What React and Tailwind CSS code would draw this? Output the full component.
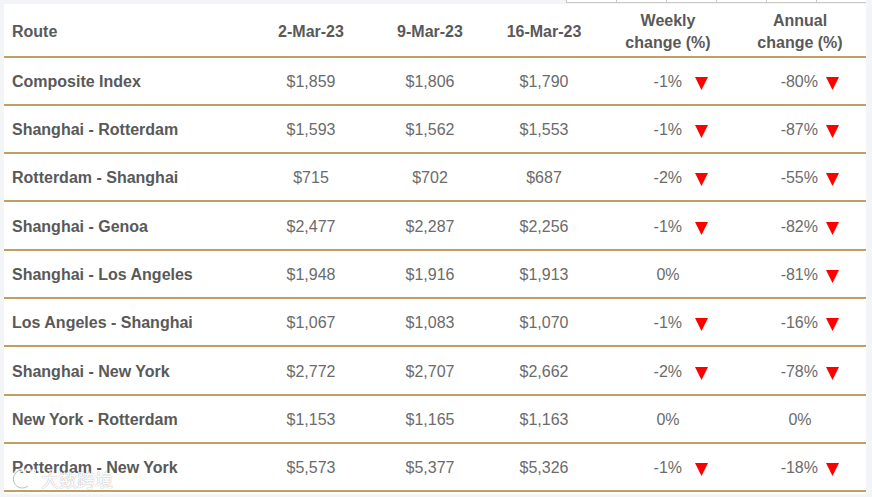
import React from 'react';

const rows = [
    { route: 'Composite Index', a: '$1,859', b: '$1,806', c: '$1,790', w: '-1%', wd: true, y: '-80%', yd: true, h: 'h-[48px]' },
    { route: 'Shanghai - Rotterdam', a: '$1,593', b: '$1,562', c: '$1,553', w: '-1%', wd: true, y: '-87%', yd: true, h: 'h-[48px]' },
    { route: 'Rotterdam - Shanghai', a: '$715', b: '$702', c: '$687', w: '-2%', wd: true, y: '-55%', yd: true, h: 'h-[48px]' },
    { route: 'Shanghai - Genoa', a: '$2,477', b: '$2,287', c: '$2,256', w: '-1%', wd: true, y: '-82%', yd: true, h: 'h-[49px]' },
    { route: 'Shanghai - Los Angeles', a: '$1,948', b: '$1,916', c: '$1,913', w: '0%', wd: false, y: '-81%', yd: true, h: 'h-[48px]' },
    { route: 'Los Angeles - Shanghai', a: '$1,067', b: '$1,083', c: '$1,070', w: '-1%', wd: true, y: '-16%', yd: true, h: 'h-[48px]' },
    { route: 'Shanghai - New York', a: '$2,772', b: '$2,707', c: '$2,662', w: '-2%', wd: true, y: '-78%', yd: true, h: 'h-[49px]' },
    { route: 'New York - Rotterdam', a: '$1,153', b: '$1,165', c: '$1,163', w: '0%', wd: false, y: '0%', yd: false, h: 'h-[48px]' },
    { route: 'Rotterdam - New York', a: '$5,573', b: '$5,377', c: '$5,326', w: '-1%', wd: true, y: '-18%', yd: true, h: 'h-[48px]' },
];

const cols = 'grid grid-cols-[246px_122px_116px_112px_136px_128px]';

function Down() {
    return (
        <svg width="13" height="13" viewBox="0 0 13 13" className="mt-[3px]">
            <polygon points="0,0 13,0 6.5,13" fill="#ff0000" />
        </svg>
    );
}

function Weekly({ v, down }) {
    if (!down) return <div className="w-[136px] text-center">{v}</div>;
    return (
        <div className="flex items-center">
            <div className="w-[82px] text-right">{v}</div>
            <div className="ml-[13px]"><Down /></div>
        </div>
    );
}

function Annual({ v, down }) {
    if (!down) return <div className="w-[128px] text-center">{v}</div>;
    return (
        <div className="flex items-center">
            <div className="w-[82px] text-right">{v}</div>
            <div className="ml-[8px]"><Down /></div>
        </div>
    );
}

export default function App() {
    return (
        <div className="w-[872px] h-[497px] bg-[#f3f4f8] font-['Liberation_Sans',Arial,sans-serif] relative overflow-hidden">
            <div className="h-[4px] flex justify-end pr-[6px]">
                {[0, 1, 2, 3, 4, 5].map((i) => (
                    <div key={i} className="w-[50px] h-[3px] bg-white border-l border-b border-[#c9c9c9]" />
                ))}
            </div>
            <div className="ml-[4px] w-[862px] h-[490px] bg-white">
                <div className={`${cols} h-[54px] pt-[3px] items-center border-b-2 border-[#c0a062] text-[16px] font-bold text-[#595959]`}>
                    <div className="pl-[8px]">Route</div>
                    <div className="text-center">2-Mar-23</div>
                    <div className="text-center">9-Mar-23</div>
                    <div className="text-center">16-Mar-23</div>
                    <div className="text-center leading-[22px]">Weekly<br />change (%)</div>
                    <div className="text-center leading-[22px]">Annual<br />change (%)</div>
                </div>
                {rows.map((r) => (
                    <div key={r.route} className={`${cols} ${r.h} pt-[2px] items-center border-b-2 border-[#c0a062] text-[16px] text-[#6b6b6b]`}>
                        <div className="pl-[8px] font-bold text-[#595959]">{r.route}</div>
                        <div className="text-center">{r.a}</div>
                        <div className="text-center">{r.b}</div>
                        <div className="text-center">{r.c}</div>
                        <Weekly v={r.w} down={r.wd} />
                        <Annual v={r.y} down={r.yd} />
                    </div>
                ))}
            </div>
            <div className="absolute left-[8px] top-[466px] flex items-center gap-[5px] opacity-80">
                <svg width="28" height="26" viewBox="0 0 28 26">
                    <path d="M14 4 A9 9 0 1 0 20 20" stroke="#ffffff" strokeWidth="4" fill="none" />
                    <path d="M14 4 A9 9 0 1 0 20 20" stroke="#9a9a9a" strokeWidth="0.8" fill="none" />
                    <circle cx="20" cy="6" r="3" stroke="#ffffff" strokeWidth="2" fill="none" />
                    <circle cx="26" cy="6" r="2" stroke="#ffffff" strokeWidth="2" fill="none" />
                </svg>
                <span className="text-[18px] text-white font-['Noto_Sans_CJK_SC',sans-serif] [text-shadow:0_0_1px_rgba(0,0,0,0.55)] leading-none">大数跨境</span>
            </div>
        </div>
    );
}
